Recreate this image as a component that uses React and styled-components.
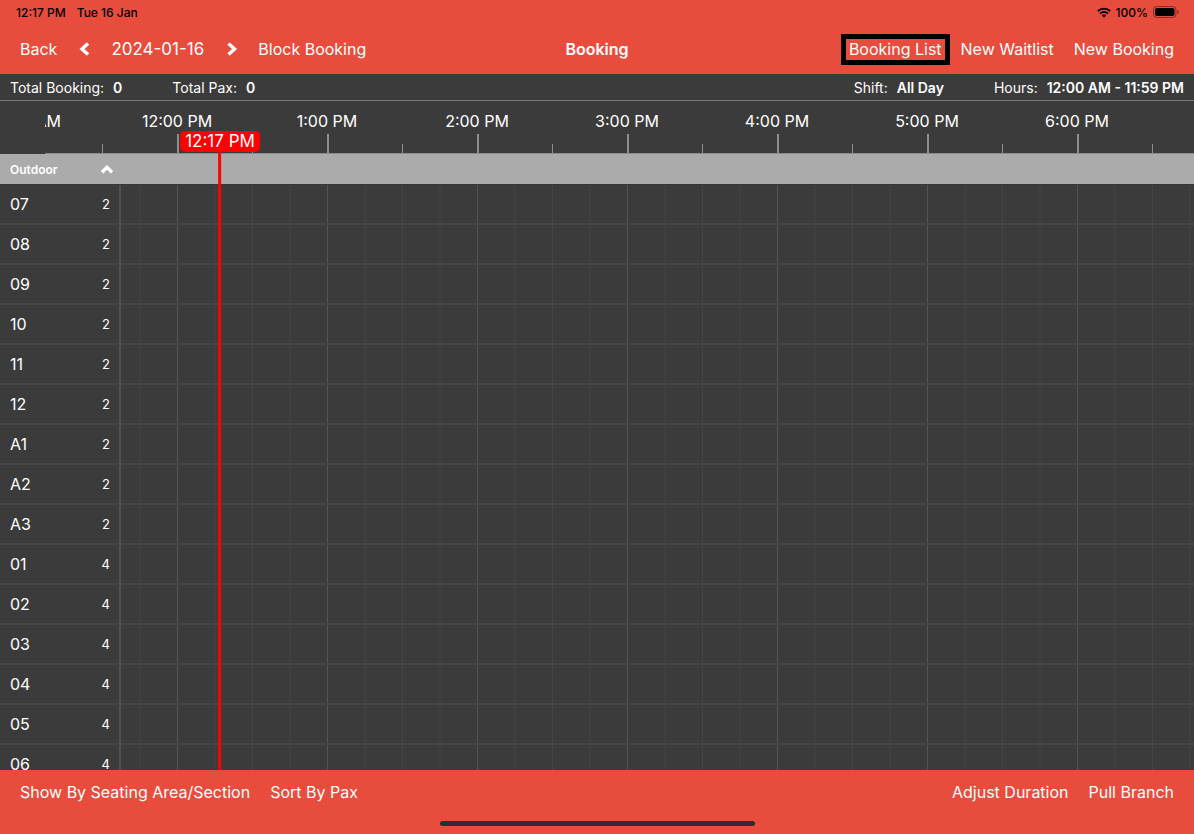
import React from 'react'
import styled, { createGlobalStyle } from 'styled-components'

const HOUR_WIDTH = 150
const NOON_X = 177

const hours = ['11:00 AM', '12:00 PM', '1:00 PM', '2:00 PM', '3:00 PM', '4:00 PM', '5:00 PM', '6:00 PM', '7:00 PM', '8:00 PM', '9:00 PM', '10:00 PM', '11:00 PM']

const tables = [
    { name: '07', pax: 2 },
    { name: '08', pax: 2 },
    { name: '09', pax: 2 },
    { name: '10', pax: 2 },
    { name: '11', pax: 2 },
    { name: '12', pax: 2 },
    { name: 'A1', pax: 2 },
    { name: 'A2', pax: 2 },
    { name: 'A3', pax: 2 },
    { name: '01', pax: 4 },
    { name: '02', pax: 4 },
    { name: '03', pax: 4 },
    { name: '04', pax: 4 },
    { name: '05', pax: 4 },
    { name: '06', pax: 4 },
]

function App() {
    const minutesPastNoon = 17
    const nowX = NOON_X + Math.round((minutesPastNoon / 60) * HOUR_WIDTH)

    return (
        <Page>
            <GlobalStyle />

            <StatusBar>
                <StatusGroup $gap={11}>
                    <span>12:17 PM</span>
                    <span>Tue 16 Jan</span>
                </StatusGroup>
                <StatusGroup $gap={5}>
                    <Wifi />
                    <span>100%</span>
                    <Battery />
                </StatusGroup>
            </StatusBar>

            <NavBar>
                <NavGroup>
                    <BarButton>Back</BarButton>
                    <IconButton aria-label="Previous day">
                        <svg width="14" height="14" viewBox="0 0 14 14">
                            <path d="M11 1.600 5 7l6 5.400" fill="none" stroke="currentColor" strokeWidth="3.4" />
                        </svg>
                    </IconButton>
                    <DateButton>2024-01-16</DateButton>
                    <IconButton aria-label="Next day">
                        <svg width="14" height="14" viewBox="0 0 14 14">
                            <path d="M4.500 1.600 10.500 7l-6 5.400" fill="none" stroke="currentColor" strokeWidth="3.4" />
                        </svg>
                    </IconButton>
                    <BarButton>Block Booking</BarButton>
                </NavGroup>
                <Title>Booking</Title>
                <NavGroup $end>
                    <OutlinedButton>Booking List</OutlinedButton>
                    <BarButton>New Waitlist</BarButton>
                    <BarButton>New Booking</BarButton>
                </NavGroup>
            </NavBar>

            <Summary>
                <SummaryGroup>
                    <Stat>Total Booking: <b>0</b></Stat>
                    <Stat>Total Pax: <b>0</b></Stat>
                </SummaryGroup>
                <SummaryGroup>
                    <Stat>Shift: <b>All Day</b></Stat>
                    <Stat>Hours: <b>12:00 AM - 11:59 PM</b></Stat>
                </SummaryGroup>
            </Summary>

            <Timeline>
                <Ruler>
                    <Track>
                        {hours.map((hour) => (
                            <Hour key={hour}>{hour}</Hour>
                        ))}
                    </Track>
                </Ruler>

                <SectionHeader>
                    <span>Outdoor</span>
                    <svg width="14" height="10" viewBox="0 0 14 10">
                        <path d="M2 8.300 7 3.300 12 8.300" fill="none" stroke="currentColor" strokeWidth="3.4" />
                    </svg>
                </SectionHeader>

                <Tables aria-label="Tables">
                    <tbody>
                        {tables.map((table) => (
                            <tr key={table.name}>
                                <Name scope="row">{table.name}</Name>
                                <Pax>{table.pax}</Pax>
                                <Slots />
                            </tr>
                        ))}
                    </tbody>
                </Tables>

                <Now style={{ left: nowX }}>
                    <NowLabel>12:17 PM</NowLabel>
                    <NowLine />
                </Now>
            </Timeline>

            <Footer>
                <FooterRow>
                    <NavGroup>
                        <BarButton>Show By Seating Area/Section</BarButton>
                        <BarButton>Sort By Pax</BarButton>
                    </NavGroup>
                    <NavGroup $end>
                        <BarButton>Adjust Duration</BarButton>
                        <BarButton>Pull Branch</BarButton>
                    </NavGroup>
                </FooterRow>
                <HomeIndicator />
            </Footer>
        </Page>
    )
}

function Wifi() {
    return (
        <svg width="14" height="11" viewBox="0 0 14 11" fill="none" stroke="currentColor" strokeWidth="1.9">
            <path d="M.8 4.1a8.9 8.9 0 0 1 12.4 0" />
            <path d="M3 6.6a5.7 5.7 0 0 1 8 0" />
            <path d="M7 10.8 4.8 8.5a3.2 3.2 0 0 1 4.4 0z" fill="currentColor" stroke="none" />
        </svg>
    )
}

function Battery() {
    return (
        <svg width="26" height="12" viewBox="0 0 26 12">
            <rect x=".5" y=".5" width="22.5" height="11" rx="3.4" fill="none" stroke="#000" strokeOpacity=".4" />
            <rect x="2" y="2" width="19.5" height="8" rx="2" fill="#000" />
            <path d="M24.3 4v4c.8-.3 1.3-1.1 1.3-2s-.5-1.7-1.3-2z" fill="#000" fillOpacity=".45" />
        </svg>
    )
}

const GlobalStyle = createGlobalStyle`
* {
    box-sizing: border-box;
}

body {
    margin: 0;
    background: #3b3b3b;
    color: white;
    font-family: Inter, "Liberation Sans", sans-serif;
    font-size: 16px;
}
`

const Page = styled.div`
display: flex;
flex-direction: column;
height: 100vh;
overflow: hidden;
`

const StatusBar = styled.div`
display: flex;
justify-content: space-between;
align-items: center;
height: 24px;
padding: 0 15px 0 16px;
background: #e84c3d;
color: black;
font-size: 12px;
font-weight: 500;
`

const StatusGroup = styled.div`
display: flex;
align-items: center;
gap: ${(props) => props.$gap}px;
`

const NavBar = styled.header`
display: grid;
grid-template-columns: 1fr auto 1fr;
align-items: center;
height: 50px;
padding: 0 20px;
background: #e84c3d;
`

const NavGroup = styled.div`
display: flex;
align-items: center;
gap: 20px;
justify-content: ${(props) => (props.$end ? 'flex-end' : 'flex-start')};
`

const BarButton = styled.button`
padding: 0;
border: 0;
background: none;
color: white;
font: inherit;
line-height: 20px;
white-space: nowrap;
cursor: pointer;
`

const IconButton = styled(BarButton)`
display: flex;
align-items: center;
`

const DateButton = styled(BarButton)`
font-size: 17px;
`

const OutlinedButton = styled(BarButton)`
margin-right: -9px;
padding: 0 3px;
border: 5px solid black;
line-height: 21px;
`

const Title = styled.h1`
margin: 0;
font-size: 16px;
font-weight: 600;
line-height: 20px;
`

const Summary = styled.div`
display: flex;
justify-content: space-between;
align-items: center;
height: 27px;
padding: 0 10px;
border-bottom: 1px solid #7b7b7b;
font-size: 14px;
`

const SummaryGroup = styled.div`
display: flex;
gap: 50px;
`

const Stat = styled.span`
display: flex;
gap: 9px;
white-space: nowrap;

& > b {
    font-weight: 600;
}
`

const Timeline = styled.main`
position: relative;
flex: 1;
min-height: 0;
overflow: hidden;
`

const Ruler = styled.div`
margin-left: 45px;
border-bottom: 1px solid #8a8a8a;
overflow: hidden;
`

const Track = styled.div`
display: flex;
height: 52px;
margin-left: -93px;
`

/* long tick in the middle of each hour, short one on the half hour */
const Hour = styled.div`
flex: none;
width: ${HOUR_WIDTH}px;
padding-top: 10px;
line-height: 20px;
text-align: center;
background:
    linear-gradient(#8e8e8e, #8e8e8e) 75px 100% / 2px 19px no-repeat,
    linear-gradient(#8e8e8e, #8e8e8e) 0 100% / 1px 9px no-repeat;
`

const SectionHeader = styled.div`
display: flex;
align-items: center;
height: 31px;
padding: 0 10px;
border-bottom: 1px solid #363636;
background: #ababab;
font-size: 12px;
font-weight: 600;

& > span {
    width: 90px;
}
`

const Tables = styled.table`
width: 100%;
table-layout: fixed;
border-spacing: 0;

& td, & th {
    height: 40px;
    padding: 0 9px 0 10px;
    border-bottom: 2px solid #464646;
}
`

const Name = styled.th`
width: 60px;
font-weight: 400;
text-align: left;
`

const Pax = styled.td`
width: 61px;
border-right: 2px solid #505050;
font-size: 13px;
text-align: right;
`

/* hour, half hour and quarter hour lines */
const Slots = styled.td`
background:
    repeating-linear-gradient(90deg, #545454 0 1px, transparent 1px 150px) 56px 0 / 150px 100%,
    repeating-linear-gradient(90deg, #454545 0 1px, transparent 1px 75px) 56px 0 / 75px 100%,
    repeating-linear-gradient(90deg, #3f3f3f 0 2px, transparent 2px 75px) 18px 0 / 75px 100%;
`

const Now = styled.div`
position: absolute;
top: 30px;
bottom: 0;
display: flex;
flex-direction: column;
align-items: center;
transform: translateX(-50%);
`

const NowLabel = styled.span`
padding: 0 5px;
border-radius: 5px;
background: red;
font-size: 17px;
line-height: 21px;
white-space: nowrap;
`

const NowLine = styled.span`
flex: 1;
width: 3px;
background: red;
`

const Footer = styled.footer`
display: flex;
flex-direction: column;
align-items: center;
justify-content: space-between;
height: 64px;
padding-bottom: 8px;
background: #e84c3d;
`

const FooterRow = styled.div`
display: flex;
justify-content: space-between;
align-items: center;
width: 100%;
height: 44px;
padding: 0 20px;
`

const HomeIndicator = styled.div`
width: 315px;
height: 5px;
border-radius: 3px;
background: #2b2f30;
`

export default App
